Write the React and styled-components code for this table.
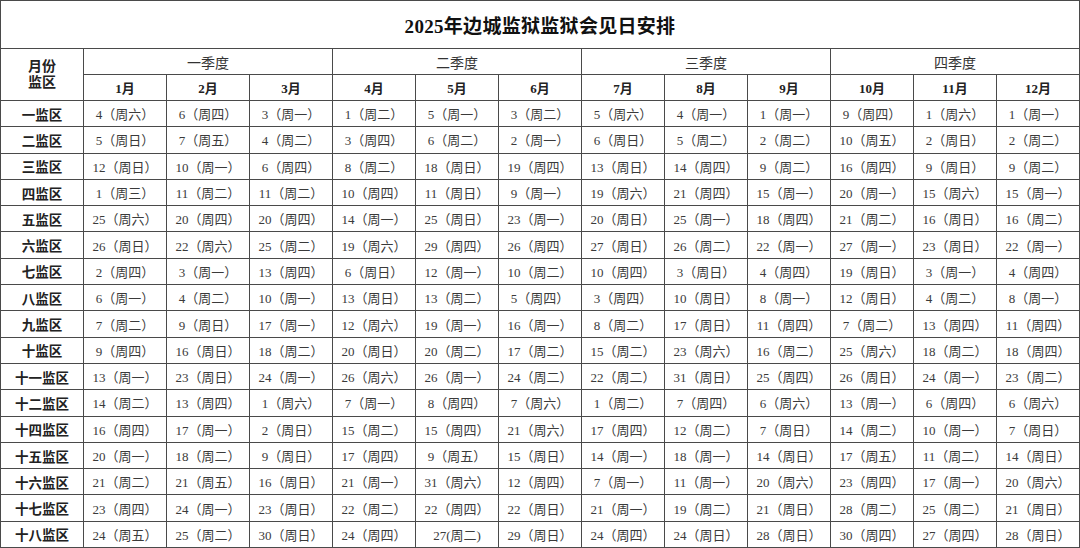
import React from "react";
import styled, { createGlobalStyle } from "styled-components";

const GlobalStyle = createGlobalStyle`
  html, body { margin: 0; padding: 0; background: #fff; }
  body { font-family: "Liberation Serif", "Noto Sans CJK SC", serif; }
`;

const quarters = ["一季度", "二季度", "三季度", "四季度"];
const months = ["1月", "2月", "3月", "4月", "5月", "6月", "7月", "8月", "9月", "10月", "11月", "12月"];

// 每行：监区名 + 12 个月的会见日（日期+星期）
const rows = [
  ["一监区", "4六 6四 3一 1二 5一 3二 5六 4一 1一 9四 1六 1一"],
  ["二监区", "5日 7五 4二 3四 6二 2一 6日 5二 2二 10五 2日 2二"],
  ["三监区", "12日 10一 6四 8二 18日 19四 13日 14四 9二 16四 9日 9二"],
  ["四监区", "1三 11二 11二 10四 11日 9一 19六 21四 15一 20一 15六 15一"],
  ["五监区", "25六 20四 20四 14一 25日 23一 20日 25一 18四 21二 16日 16二"],
  ["六监区", "26日 22六 25二 19六 29四 26四 27日 26二 22一 27一 23日 22一"],
  ["七监区", "2四 3一 13四 6日 12一 10二 10四 3日 4四 19日 3一 4四"],
  ["八监区", "6一 4二 10一 13日 13二 5四 3四 10日 8一 12日 4二 8一"],
  ["九监区", "7二 9日 17一 12六 19一 16一 8二 17日 11四 7二 13四 11四"],
  ["十监区", "9四 16日 18二 20日 20二 17二 15二 23六 16二 25六 18二 18四"],
  ["十一监区", "13一 23日 24一 26六 26一 24二 22二 31日 25四 26日 24一 23二"],
  ["十二监区", "14二 13四 1六 7一 8四 7六 1二 7四 6六 13一 6四 6六"],
  ["十四监区", "16四 17一 2日 15二 15四 21六 17四 12二 7日 14二 10一 7日"],
  ["十五监区", "20一 18二 9日 17四 9五 15日 14一 18一 14日 17五 11二 14日"],
  ["十六监区", "21二 21五 16日 21一 31六 12四 7一 11一 20六 23四 17一 20六"],
  ["十七监区", "23四 24一 23日 22二 22四 22日 21一 19二 21日 28二 25二 21日"],
  ["十八监区", "24五 25二 30日 24四 27!二 29日 24四 24日 28日 30四 27四 28日"],
];

const formatDay = (s) => {
  const w = s.slice(-1);
  if (s.includes("!")) return `${s.split("!")[0]}(周${w})`;
  return `${s.slice(0, -1)}（周${w}）`;
};

function App() {
  return (
    <>
      <GlobalStyle />
      <Table>
        <colgroup>
          {Array.from({ length: 13 }).map((_, i) => (
            <col key={i} />
          ))}
        </colgroup>
        <tbody>
          <TitleRow>
            <Title colSpan={13}>2025年边城监狱监狱会见日安排</Title>
          </TitleRow>
          <HeadRow>
            <Corner rowSpan={2}>
              月份
              <br />
              监区
            </Corner>
            {quarters.map((q) => (
              <Quarter key={q} colSpan={3}>
                {q}
              </Quarter>
            ))}
          </HeadRow>
          <HeadRow>
            {months.map((m) => (
              <Month key={m}>{m}</Month>
            ))}
          </HeadRow>
          {rows.map(([name, days]) => (
            <DataRow key={name}>
              <Region>{name}</Region>
              {days.split(" ").map((d, i) => (
                <Cell key={i}>{formatDay(d)}</Cell>
              ))}
            </DataRow>
          ))}
        </tbody>
      </Table>
    </>
  );
}

export default App;

const Table = styled.table`
  width: 1080px;
  border-collapse: collapse;
  table-layout: fixed;
  col { width: 83px; }
  td {
    border: 1px solid #4a4a4a;
    padding: 0;
    text-align: center;
    vertical-align: middle;
    white-space: nowrap;
  }
`;

const TitleRow = styled.tr`
  height: 48px;
`;

const Title = styled.td`
  font-size: 19px;
  font-weight: bold;
  color: #111;
  letter-spacing: 0.3px;
`;

const HeadRow = styled.tr`
  height: 26px;
`;

const Corner = styled.td`
  font-size: 14px;
  font-weight: bold;
  line-height: 16px;
  color: #222;
`;

const Quarter = styled.td`
  font-size: 14px;
  color: #333;
`;

const Month = styled.td`
  font-size: 13px;
  font-weight: bold;
  color: #222;
`;

const DataRow = styled.tr`
  height: 26.3px;
`;

const Region = styled.td`
  font-size: 13.5px;
  font-weight: bold;
  color: #222;
`;

const Cell = styled.td`
  font-size: 13px;
  color: #3a3a3a;
`;
